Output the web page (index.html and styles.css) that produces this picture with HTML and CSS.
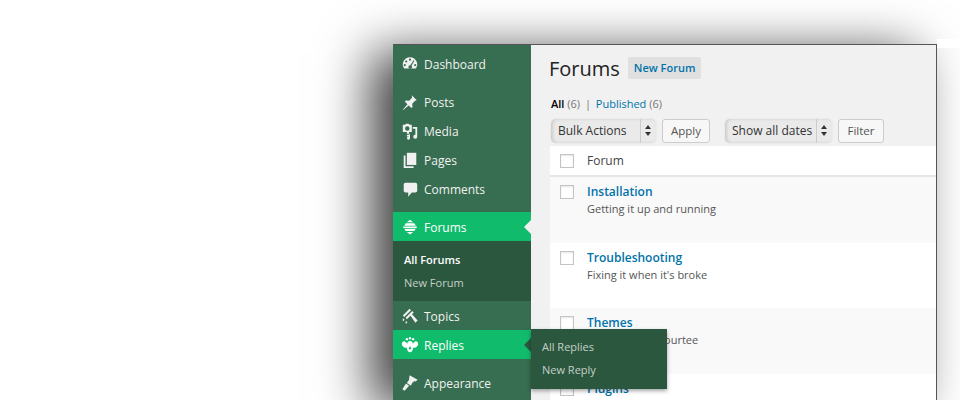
FILE: index.html
```html
<!DOCTYPE html>
<html lang="en">
<head>
<meta charset="utf-8">
<title>Forums</title>
<link rel="stylesheet" href="styles.css">
</head>
<body>
<div class="window">
    <!-- admin menu -->
    <nav class="sidebar">
        <a class="menu-item">
            <svg class="icon" viewBox="0 0 20 20"><path fill-rule="evenodd" d="M10 2.500a8 8 0 0 0-6.600 12.500h13.200A8 8 0 0 0 10 2.500zM10 4a1.200 1.200 0 1 1 0 2.400A1.200 1.200 0 0 1 10 4zM5.800 6a1.200 1.200 0 1 1 0 2.400 1.200 1.200 0 0 1 0-2.400zM4.200 10a1.200 1.200 0 1 1 0 2.400 1.200 1.200 0 0 1 0-2.400zM15.800 10a1.200 1.200 0 1 1 0 2.400 1.200 1.200 0 0 1 0-2.400zM14 5.800l.9.600-3.200 5.600a1.900 1.900 0 1 1-1.300-.7z"/></svg>
            <span>Dashboard</span>
        </a>
        <div class="gap"></div>
        <a class="menu-item">
            <svg class="icon" viewBox="0 0 20 20"><path d="M12 2.500l5.500 5.500-1.800.7-3.200 3.200.3 3.600-1.300 1.300-3-3-6 5.200-.5-.5 5.200-6-3-3 1.300-1.300 3.600.3 3.200-3.200z"/></svg>
            <span>Posts</span>
        </a>
        <a class="menu-item">
            <svg class="icon" viewBox="0 0 20 20"><path fill-rule="evenodd" d="M2 3h2.500l1-1h3l1 1H12v8H9v2H6.500v-2H2zM7 4.800a2.500 2.500 0 1 0 0 5 2.500 2.500 0 0 0 0-5z"/><path d="M13 5.500h5v10.800a2.200 2.200 0 1 1-2-2.100V7.500h-3zM6.500 14.500l3.500-.8v4.200a1.700 1.700 0 1 1-1.600-1.700v-.6l-1.900.4z"/></svg>
            <span>Media</span>
        </a>
        <a class="menu-item">
            <svg class="icon" viewBox="0 0 20 20"><path d="M6.500 2H17v13.500H6.500z"/><path d="M3 5h2v12h9v2H3z"/></svg>
            <span>Pages</span>
        </a>
        <a class="menu-item">
            <svg class="icon" viewBox="0 0 20 20"><path d="M5 3h11a2 2 0 0 1 2 2v7a2 2 0 0 1-2 2h-4l-4 4.500V14H5a2 2 0 0 1-2-2V5a2 2 0 0 1 2-2z"/></svg>
            <span>Comments</span>
        </a>
        <div class="gap"></div>
        <a class="menu-item active">
            <svg class="icon" viewBox="0 0 20 20"><path d="M10 2l3.500 2.800h-7zM5.300 5.800h9.400L16.500 8.500h-13zM2.500 9.500h15v1.600h-15zM3.500 12h13l-1.800 2.500H5.300zM6.500 15.500h7L10 18.300z"/></svg>
            <span>Forums</span>
        </a>
        <div class="submenu">
            <a class="sub-link current">All Forums</a>
            <a class="sub-link">New Forum</a>
        </div>
        <a class="menu-item">
            <svg class="icon" viewBox="0 0 20 20"><path d="M9.500 2l1.600 1.600-7.500 7.500L2 9.500zM12.500 4.500l1.600 1.600-7.500 7.500L5 12zM10.500 9.800l1.800-1.800 6.200 7-2.500 2.500zM2 12.200l2 2-2 2zM5.200 15.300l2 2-2 1.700z"/></svg>
            <span>Topics</span>
        </a>
        <a class="menu-item hovered">
            <svg class="icon" viewBox="0 0 20 20"><path fill-rule="evenodd" d="M7 8.500a3 3 0 0 1 6 0l2.500-2.500c2-.8 4 1 3.500 3.500-.5 2.500-2.800 4-5.500 3.500-.3 3-1.500 5-3.500 5s-3.200-2-3.500-5C3.800 13.500 1.500 12 1 9.500.5 7 2.500 5.200 4.500 6zM10 11l-1.500 3a1.600 1.600 0 0 0 3 0z"/><circle cx="6.500" cy="3.500" r="1.300"/><circle cx="10" cy="2.500" r="1.300"/><circle cx="13.500" cy="3.500" r="1.300"/></svg>
            <span>Replies</span>
        </a>
        <div class="gap"></div>
        <a class="menu-item">
            <svg class="icon" viewBox="0 0 20 20"><path d="M9.500 1.500l9 5-2.300 1.800-2-.5-.3 1.500-1.200.2-1.700 3.500-4.500-3 2.500-3.500zM5.500 10.500l3.500 2.500-5 5.500L1.500 17z"/></svg>
            <span>Appearance</span>
        </a>
    </nav>

    <main class="content">
        <div class="title-row">
            <h1 class="title">Forums</h1>
            <a class="add-new">New Forum</a>
        </div>
        <div class="views">
            <span class="view-current">All</span> <span class="count">(6)</span>
            <span class="sep">|</span>
            <a class="link">Published</a> <span class="count">(6)</span>
        </div>
        <div class="tablenav">
            <div class="select bulk"><span>Bulk Actions</span><i class="spinner"></i></div>
            <button class="btn apply">Apply</button>
            <div class="select dates"><span>Show all dates</span><i class="spinner"></i></div>
            <button class="btn filter">Filter</button>
        </div>
        <div class="table">
            <div class="table-head">
                <span class="check"></span>
                <span>Forum</span>
            </div>
            <div class="row alt">
                <span class="check"></span>
                <div>
                    <a class="row-title">Installation</a>
                    <p class="row-desc">Getting it up and running</p>
                </div>
            </div>
            <div class="row">
                <span class="check"></span>
                <div>
                    <a class="row-title">Troubleshooting</a>
                    <p class="row-desc">Fixing it when it's broke</p>
                </div>
            </div>
            <div class="row alt">
                <span class="check"></span>
                <div>
                    <a class="row-title">Themes</a>
                    <p class="row-desc">Using Twenty Fourtee</p>
                </div>
            </div>
            <div class="row">
                <span class="check"></span>
                <div>
                    <a class="row-title">Plugins</a>
                </div>
            </div>
        </div>
    </main>

    <!-- flyout for the hovered Replies item -->
    <div class="flyout">
        <a class="sub-link">All Replies</a>
        <a class="sub-link">New Reply</a>
    </div>
    <div class="shadow-cut"></div>
</div>
</body>
</html>
```

FILE: styles.css
```css
html {
    overflow: hidden;
}
body {
    background-color: #fff;
    margin: 0;
    padding: 44px 0 0 393px;
    width: 960px;
    height: 400px;
    box-sizing: border-box;
    overflow: hidden;
    font-family: "Open Sans", sans-serif;
    font-size: 13px;
    color: #444;
}
a {
    text-decoration: none;
}
.window {
    position: relative;
    display: flex;
    width: 544px;
    height: 356px;
    box-sizing: border-box;
    border-top: 1px solid #555;
    border-right: 1px solid #555;
    background-color: #f1f1f1;
    box-shadow: -22px 8px 48px rgba(0, 0, 0, 0.75);
}
.shadow-cut {
    position: absolute;
    left: 544px;
    top: -6px;
    width: 23px;
    height: 9px;
    background-color: #fff;
}

/* sidebar */
.sidebar {
    flex: 0 0 138px;
    box-sizing: border-box;
    padding-top: 4px;
    background-color: #376d50;
}
.menu-item {
    position: relative;
    display: flex;
    align-items: center;
    gap: 5px;
    height: 29px;
    padding-left: 8px;
    color: #f1f1f1;
    font-size: 12px;
}
.menu-item span {
    margin-top: 2px;
}
.icon {
    flex: none;
    width: 18px;
    height: 18px;
    fill: #f1f1f1;
}
.gap {
    height: 9px;
}
.menu-item.active,
.menu-item.hovered {
    background-color: #11bb6c;
    color: #fff;
}
.menu-item.active .icon,
.menu-item.hovered .icon {
    fill: #fff;
}
.menu-item.active::after,
.menu-item.hovered::after {
    content: "";
    position: absolute;
    right: 0;
    top: 7.5px;
    border: 7px solid transparent;
    border-right-color: #f1f1f1;
    border-left-width: 0;
}
.menu-item.hovered::after {
    border-right-color: #2b573f;
}
.submenu {
    display: flex;
    flex-direction: column;
    gap: 5px;
    height: 60px;
    box-sizing: border-box;
    padding: 10px 0 0 11px;
    background-color: #2b573f;
}
.sub-link {
    display: block;
    line-height: 18px;
    font-size: 11px;
    color: #c5d0c8;
}
.sub-link.current {
    color: #fff;
    font-weight: 600;
}
.flyout {
    position: absolute;
    left: 138px;
    top: 284px;
    display: flex;
    flex-direction: column;
    gap: 5px;
    width: 136px;
    height: 60px;
    box-sizing: border-box;
    padding: 9px 0 0 11px;
    background-color: #2b573f;
    box-shadow: 0 2px 4px rgba(0, 0, 0, 0.35);
}

/* main column */
.content {
    flex: 1;
    min-width: 0;
    padding: 11px 0 0 18px;
}
.title-row {
    display: flex;
    align-items: center;
    gap: 8px;
    height: 24px;
}
.title {
    margin: 0;
    font-size: 20px;
    font-weight: 400;
    color: #222;
}
.add-new {
    padding: 0 6px;
    line-height: 22px;
    font-size: 11px;
    font-weight: 600;
    color: #0073aa;
    background-color: #e0e0e0;
    border-radius: 2px;
}
.views {
    margin: 15px 0 0 2px;
    line-height: 18px;
    font-size: 11px;
}
.view-current {
    color: #000;
    font-weight: 600;
}
.count {
    color: #777;
}
.sep {
    margin: 0 2px;
    color: #777;
}
.link {
    color: #0073aa;
}
.tablenav {
    display: flex;
    align-items: center;
    margin: 5px 0 0 2px;
    height: 25px;
    font-size: 12px;
}
.select {
    display: flex;
    align-items: center;
    height: 24px;
    box-sizing: border-box;
    padding: 0 0 0 7px;
    border-radius: 5px;
    background-color: #eaeaea;
    box-shadow: inset 2px 0 3px #ccc, 0 0 2px #ddd;
    color: #333;
    white-space: nowrap;
}
.select span {
    flex: 1;
    height: 100%;
    line-height: 24px;
    border-right: 1px solid #ccc;
}
.spinner {
    position: relative;
    flex: none;
    width: 15px;
    height: 24px;
}
.spinner::before,
.spinner::after {
    content: "";
    position: absolute;
    left: 4px;
    border: 3.5px solid transparent;
    border-top-width: 0;
    border-bottom: 4px solid #333;
}
.spinner::before {
    top: 6px;
}
.spinner::after {
    top: 13px;
    transform: rotate(180deg);
}
.bulk {
    width: 105px;
}
.dates {
    width: 107px;
    margin-left: 15px;
}
.btn {
    height: 24px;
    margin-left: 6px;
    padding: 0;
    border: 1px solid #ccc;
    border-radius: 3px;
    background-color: #f7f7f7;
    font: inherit;
    font-size: 11.5px;
    color: #555;
}
.apply {
    width: 48px;
}
.filter {
    width: 46px;
}

/* forums table */
.table {
    margin: 3px 0 0 1px;
}
.table-head {
    display: flex;
    align-items: center;
    gap: 13px;
    height: 29px;
    padding-left: 10px;
    border-bottom: 2px solid #e5e5e5;
    background-color: #fff;
    font-size: 12px;
}
.row {
    display: flex;
    gap: 13px;
    height: 65.5px;
    box-sizing: border-box;
    padding: 7px 0 0 10px;
    background-color: #fff;
}
.row.alt {
    background-color: #f9f9f9;
}
.check {
    flex: none;
    box-sizing: border-box;
    width: 14px;
    height: 14px;
    margin-top: 1px;
    border: 1px solid #c4c4c4;
    background-color: #fff;
    box-shadow: inset 0 1px 2px rgba(0, 0, 0, 0.1);
}
.table-head .check {
    margin-top: 0;
}
.row-title {
    display: block;
    line-height: 16px;
    font-size: 12px;
    font-weight: 600;
    color: #0073aa;
}
.row-desc {
    margin: 0;
    line-height: 18px;
    font-size: 11px;
    color: #555;
}
```
